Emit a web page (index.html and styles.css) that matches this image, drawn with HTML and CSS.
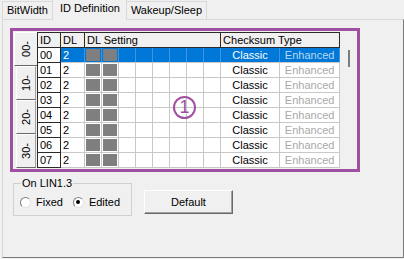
FILE: index.html
```html
<!DOCTYPE html>
<html lang="en">
<head>
  <meta charset="UTF-8">
  <title>ID Definition</title>
  <link rel="stylesheet" href="styles.css">
</head>
<body>
  <div class="tabstrip">
    <div class="tab">BitWidth</div>
    <div class="tab active">ID Definition</div>
    <div class="tab">Wakeup/Sleep</div>
  </div>
  <div class="panel">
    <div class="frame">
      <div class="vtabs">
        <div class="vtab active"><span>00-</span></div>
        <div class="vtab"><span>10-</span></div>
        <div class="vtab"><span>20-</span></div>
        <div class="vtab"><span>30-</span></div>
      </div>
      <table class="grid">
        <colgroup>
          <col class="c-id"><col class="c-dl">
          <col class="c-bit"><col class="c-bit"><col class="c-bit"><col class="c-bit">
          <col class="c-bit"><col class="c-bit"><col class="c-bit"><col class="c-bit">
          <col class="c-classic"><col class="c-enh">
        </colgroup>
        <thead>
          <tr>
            <th>ID</th>
            <th>DL</th>
            <th colspan="8">DL Setting</th>
            <th colspan="2">Checksum Type</th>
          </tr>
        </thead>
        <tbody id="gridBody"></tbody>
      </table>
      <div class="vscroll"><div class="thumb"></div></div>
      <div class="mark">1</div>
    </div>
    <div class="bottom">
      <fieldset class="group">
        <legend>On LIN1.3</legend>
        <div class="opts">
          <label class="radio"><span class="dot"></span>Fixed</label>
          <label class="radio"><span class="dot checked"></span>Edited</label>
        </div>
      </fieldset>
      <button class="btn">Default</button>
    </div>
  </div>

  <script>
    const body = document.getElementById("gridBody");
    for (let i = 0; i < 8; i++) {
      const row = document.createElement("tr");
      if (i === 0) row.className = "sel";
      let html = `<td class="id">0${i}</td><td>2</td>`;
      for (let c = 0; c < 8; c++) {
        html += `<td class="${c < 2 ? "bit on" : "bit"}"></td>`;
      }
      html += `<td class="sum">Classic</td><td class="sum off">Enhanced</td>`;
      row.innerHTML = html;
      body.appendChild(row);
    }
  </script>
</body>
</html>
```
FILE: styles.css
```css
body {
  margin: 0;
  width: 404px;
  height: 259px;
  overflow: hidden;
  background-color: #f0f0f0;
  font: 11px "Liberation Sans", Arial, sans-serif;
  color: #000;
}

.tabstrip {
  display: flex;
  align-items: flex-end;
  height: 19px;
  padding-left: 2px;
}

.tab {
  height: 17px;
  line-height: 17px;
  padding: 0 4px;
  margin-right: -1px;
  border: 1px solid #d9d9d9;
  border-bottom: none;
}

.tab.active {
  position: relative;
  z-index: 1;
  height: 20px;
  line-height: 17px;
  padding: 0 6px 0 7px;
  margin-bottom: -1px;
  background-color: #f0f0f0;
}

.panel {
  width: 402px;
  height: 239px;
  box-sizing: border-box;
  margin-left: 2px;
  border: 1px solid #d9d9d9;
  border-right-color: #7a7a7a;
  border-bottom-color: #7a7a7a;
}

.frame {
  position: relative;
  display: flex;
  align-items: flex-start;
  width: 350px;
  height: 144px;
  box-sizing: border-box;
  margin: 8px 0 0 7px;
  border: 3px solid #a050a0;
}

.vtabs {
  flex: none;
  width: 24px;
  padding-top: 1px;
}

.vtab {
  height: 34px;
  box-sizing: border-box;
  display: flex;
  align-items: center;
  justify-content: center;
  margin: 0 1px 0 3px;
  border: 1px solid;
  border-color: #fff #a0a0a0 #696969 #fff;
}

.vtab.active {
  margin: 0 0 0 1px;
  border-right: none;
}

.vtab span {
  writing-mode: vertical-rl;
  transform: rotate(180deg);
}

.grid {
  flex: none;
  width: 302px;
  margin-top: 1px;
  table-layout: fixed;
  border-collapse: collapse;
  background-color: #fff;
}

.c-id { width: 23px; }
.c-dl { width: 24px; }
.c-bit { width: 17px; }
.c-classic { width: 59px; }
.c-enh { width: 60px; }

.grid tr {
  height: 15px;
}

.grid th,
.grid td {
  padding: 0 2px;
  line-height: 13px;
  white-space: nowrap;
  overflow: hidden;
  border: 1px solid #c8c8c8;
}

.grid th {
  font-weight: normal;
  text-align: left;
  background-color: #f0f0f0;
  border-color: #2b2b2b;
}

.grid td.id {
  border-color: #2b2b2b;
}

.grid td.sum {
  padding: 0;
  text-align: center;
}

.grid td.off {
  color: #a9a9a9;
}

.grid td.bit.on {
  background-color: #7f7f7f;
  box-shadow: inset 0 0 0 1px #fff;
}

.sel td {
  background-color: #0078d7;
  color: #fff;
  border-color: #3c95de;
  border-bottom-color: #c8c8c8;
}

.sel td.id {
  background-color: #fff;
  color: #000;
  border-color: #2b2b2b;
}

.sel td.off {
  color: #bcd8f2;
}

.sel td.bit.on {
  box-shadow: inset 0 0 0 1px #0078d7;
}

.vscroll {
  flex: none;
  width: 18px;
}

.thumb {
  width: 2px;
  height: 17px;
  margin: 19px 0 0 8px;
  background-color: #7d7d7d;
}

.mark {
  position: absolute;
  left: 160px;
  top: 65px;
  width: 23px;
  height: 23px;
  box-sizing: border-box;
  border: 2px solid #a050a0;
  border-radius: 50%;
  color: #a050a0;
  font-size: 18px;
  line-height: 19px;
  text-align: center;
}

.bottom {
  display: flex;
  align-items: flex-start;
  margin: 5px 0 0 10px;
}

.group {
  width: 119px;
  min-width: 0;
  box-sizing: border-box;
  margin: 0;
  padding: 0 4px 5px 6px;
  border: 1px solid #d0d0d0;
}

.group legend {
  margin-left: 1px;
  padding: 0 1px;
  line-height: 13px;
}

.opts {
  display: flex;
  align-items: center;
  height: 16px;
  margin-top: 4px;
}

.radio {
  display: flex;
  align-items: center;
  margin-right: 10px;
}

.radio:last-child {
  margin-right: 0;
}

.dot {
  display: flex;
  align-items: center;
  justify-content: center;
  width: 11px;
  height: 11px;
  box-sizing: border-box;
  margin-right: 5px;
  border: 1px solid;
  border-color: #808080 #e3e3e3 #e3e3e3 #808080;
  border-radius: 50%;
  background-color: #fff;
}

.dot.checked::after {
  content: "";
  width: 4px;
  height: 4px;
  border-radius: 50%;
  background-color: #000;
}

.btn {
  width: 89px;
  height: 24px;
  margin: 13px 0 0 12px;
  padding: 0;
  font: inherit;
  color: #000;
  background-color: #f0f0f0;
  border: 1px solid;
  border-color: #fff #696969 #696969 #fff;
  box-shadow: inset -1px -1px 0 #a0a0a0;
}
```
